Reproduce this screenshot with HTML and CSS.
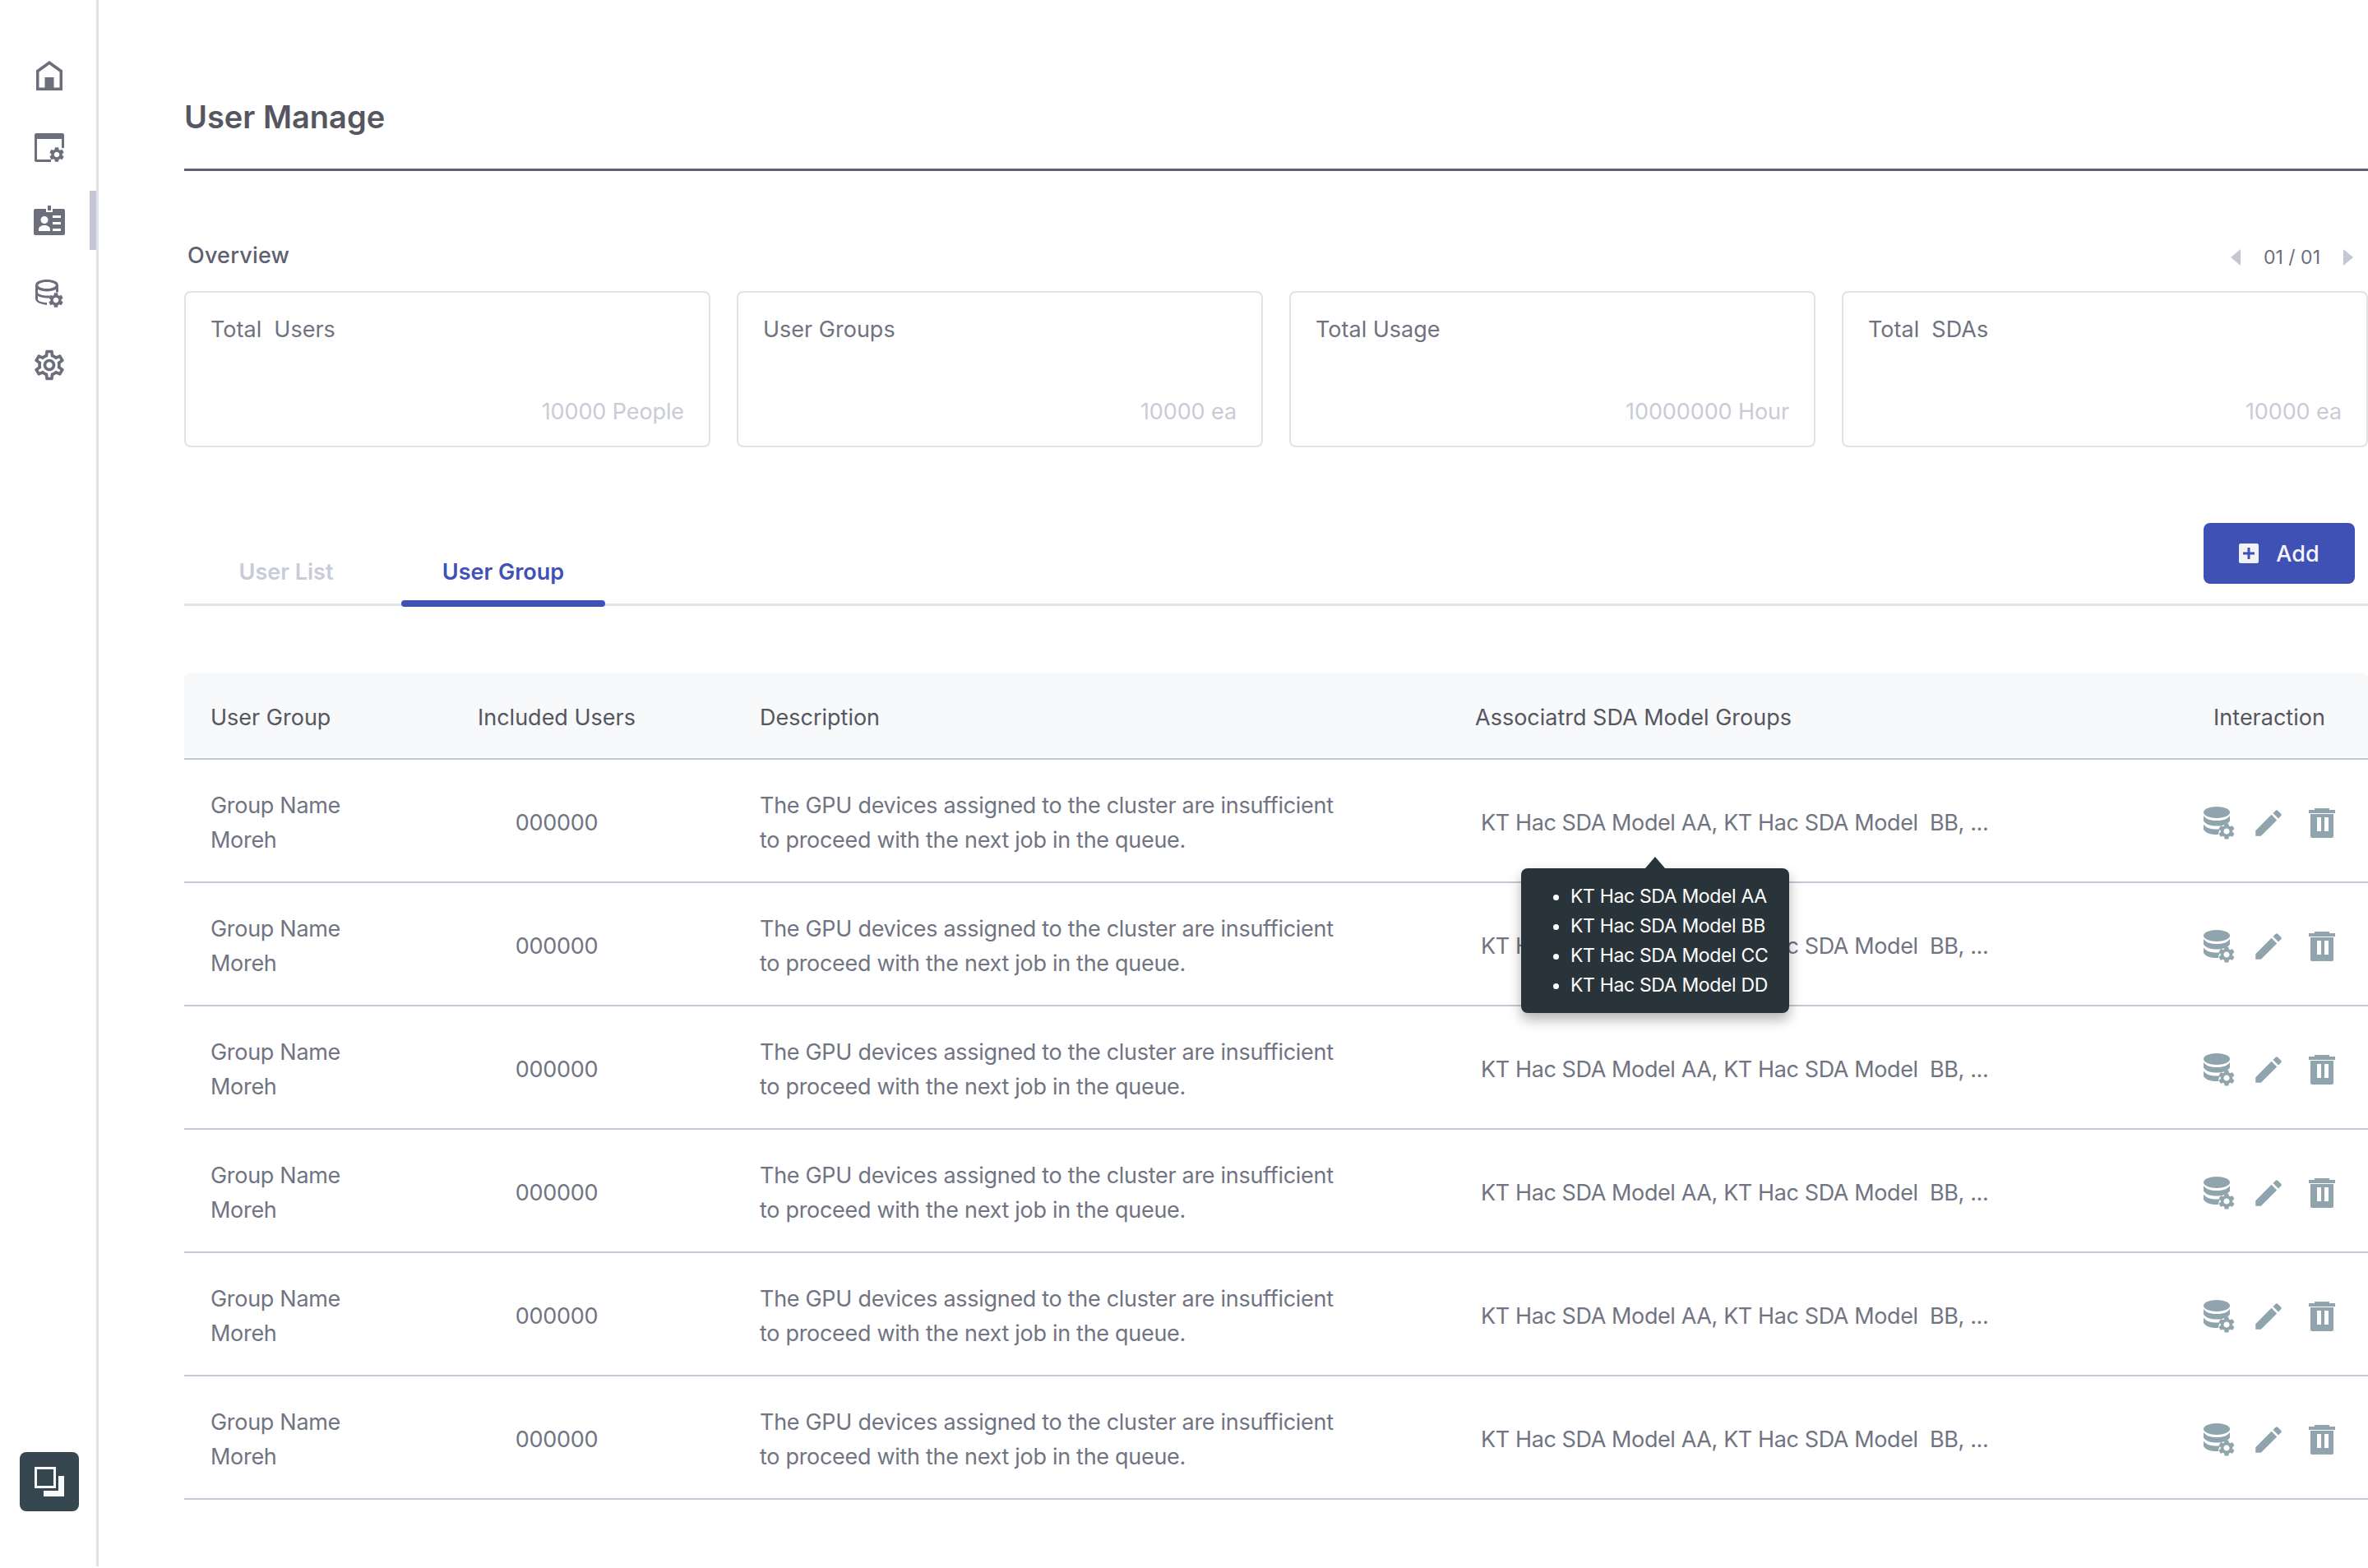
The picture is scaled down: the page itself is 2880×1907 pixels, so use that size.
FILE: index.html
```html
<!DOCTYPE html>
<html lang="en">
<head>
    <meta charset="UTF-8">
    <title>User Manage</title>
    <link rel="stylesheet" href="styles.css">
</head>
<body>
    <svg class="defs" width="0" height="0">
        <symbol id="gear" viewBox="0 0 24 24"><path d="M19.14 12.94c.04-.3.06-.61.06-.94 0-.32-.02-.64-.07-.94l2.03-1.58c.18-.14.23-.41.12-.61l-1.92-3.32c-.12-.22-.37-.29-.59-.22l-2.39.96c-.5-.38-1.03-.7-1.62-.94l-.36-2.54c-.04-.24-.24-.41-.48-.41h-3.84c-.24 0-.43.17-.47.41l-.36 2.54c-.59.24-1.13.57-1.62.94l-2.39-.96c-.22-.08-.47 0-.59.22L2.74 8.87c-.12.21-.08.47.12.61l2.03 1.58c-.05.3-.09.63-.09.94s.02.64.07.94l-2.03 1.58c-.18.14-.23.41-.12.61l1.92 3.32c.12.22.37.29.59.22l2.39-.96c.5.38 1.03.7 1.62.94l.36 2.54c.05.24.24.41.48.41h3.84c.24 0 .44-.17.47-.41l.36-2.54c.59-.24 1.13-.56 1.62-.94l2.39.96c.22.08.47 0 .59-.22l1.92-3.32c.12-.22.07-.47-.12-.61l-2.01-1.58zM12 15.6c-1.98 0-3.6-1.62-3.6-3.6s1.62-3.6 3.6-3.6 3.6 1.62 3.6 3.6-1.62 3.6-3.6 3.6z"/></symbol>
        <symbol id="db-gear" viewBox="0 0 40 42">
            <ellipse cx="16" cy="7" rx="16" ry="7"/>
            <path d="M0 11C3 15.500 9 17 16 17S29 15.500 32 11V17.500C29 22 23 23.500 16 23.500S3 22 0 17.500z"/>
            <path d="M0 21.500C3 26 9 27.500 16 27.500c1.500 0 3-.1 4.500-.3-1.500 2-2.500 4.400-2.500 6.700-.7.1-1.300.1-2 .1-7 0-13-1.500-16-6z"/>
            <use href="#gear" x="16" y="18" width="24" height="24"/>
        </symbol>
        <symbol id="pencil" viewBox="0 0 24 24"><path d="M3 17.250V21h3.750L17.810 9.940l-3.750-3.750L3 17.250zM20.710 7.040c.39-.39.39-1.020 0-1.410l-2.340-2.340c-.39-.39-1.020-.39-1.410 0l-1.830 1.830 3.750 3.750 1.830-1.830z"/></symbol>
        <symbol id="trash" viewBox="0 0 32 36"><path fill-rule="evenodd" d="M7 0h18v2h7v4H0V2h7zM2 7h28v27c0 1-1 2-2 2H4c-1 0-2-1-2-2zm8 4v17h5V11zm9 0v17h5V11z"/></symbol>
    </svg>

    <nav class="sidebar">
        <ul class="nav-list">
            <li class="nav-item">
                <svg class="nav-icon" viewBox="0 0 36 36"><path fill-rule="evenodd" d="M18 0L34 11.500V36H2V11.500zM18 4.500L5.500 13.500V32.500h7V20h11V32.500h7V13.500z"/></svg>
            </li>
            <li class="nav-item">
                <svg class="nav-icon" viewBox="0 0 36 36"><path d="M2 0h32c1 0 2 1 2 2v16h-3V7H3v25h17v3H2c-1 0-2-1-2-2V2c0-1 1-2 2-2z"/><use href="#gear" x="16" y="15" width="22" height="22"/></svg>
            </li>
            <li class="nav-item active">
                <svg class="nav-icon nav-card" viewBox="0 0 38 36"><path fill-rule="evenodd" d="M17 0h4v6h-4zM2 4h13v4h8V4h13c1 0 2 1 2 2v28c0 1-1 2-2 2H2c-1 0-2-1-2-2V6c0-1 1-2 2-2zM13 13a4.500 4.500 0 1 0 0 9 4.500 4.500 0 0 0 0-9zM6 31h14v-2c0-3-3-5-7-5s-7 2-7 5zM23 12v3h10v-3zM23 20v3h10v-3zM23 28v3h10v-3z"/></svg>
            </li>
            <li class="nav-item">
                <svg class="nav-icon nav-db" viewBox="0 0 36 36"><path fill-rule="evenodd" d="M14 0c7 0 14 2 14 7v8.500h-3V12c-3 1.500-7 2.500-11 2.500S6 13.500 3 12v4c1 2 6 3.500 11 3.500h3.500v3H14c-4 0-8-1-11-2.500v4.500c1 2 6 3.500 11 3.500v3C7 30 0 28 0 23V7c0-5 7-7 14-7zm0 3C8 3 4 5 3 7c1 2 5 4 11 4s10-2 11-4c-1-2-5-4-11-4z"/><use href="#gear" x="14" y="14" width="22" height="22"/></svg>
            </li>
            <li class="nav-item">
                <svg class="nav-icon gear-lg" viewBox="0 0 24 24"><path d="M19.430 12.980c.04-.32.07-.64.07-.98 0-.34-.03-.66-.07-.98l2.110-1.650c.19-.15.24-.42.12-.64l-2-3.460c-.09-.16-.26-.25-.44-.25-.06 0-.12.01-.17.03l-2.490 1c-.52-.4-1.080-.73-1.690-.98l-.38-2.650C14.460 2.180 14.250 2 14 2h-4c-.25 0-.46.18-.49.42l-.38 2.650c-.61.25-1.170.59-1.690.98l-2.490-1c-.06-.02-.12-.03-.18-.03-.17 0-.34.09-.43.25l-2 3.460c-.13.22-.07.49.12.64l2.110 1.650c-.04.32-.07.65-.07.98 0 .33.03.66.07.98l-2.110 1.650c-.19.15-.24.42-.12.64l2 3.460c.09.16.26.25.44.25.06 0 .12-.01.17-.03l2.490-1c.52.4 1.080.73 1.690.98l.38 2.650c.03.24.24.42.49.42h4c.25 0 .46-.18.49-.42l.38-2.650c.61-.25 1.170-.59 1.690-.98l2.490 1c.06.02.12.03.18.03.17 0 .34-.09.43-.25l2-3.460c.12-.22.07-.49-.12-.64l-2.110-1.650zm-1.980-1.710c.04.31.05.52.05.73 0 .21-.02.43-.05.73l-.14 1.130.89.7 1.080.84-.7 1.210-1.270-.51-1.040-.42-.9.68c-.43.32-.84.56-1.250.73l-1.060.43-.16 1.130-.2 1.350h-1.400l-.19-1.350-.16-1.130-1.060-.43c-.43-.18-.83-.41-1.230-.71l-.91-.7-1.060.43-1.270.51-.7-1.210 1.080-.84.89-.7-.14-1.130c-.03-.31-.05-.54-.05-.74s.02-.43.05-.73l.14-1.130-.89-.7-1.080-.84.7-1.210 1.270.51 1.040.42.9-.68c.43-.32.84-.56 1.250-.73l1.060-.43.16-1.130.2-1.350h1.390l.19 1.350.16 1.130 1.060.43c.43.18.83.41 1.230.71l.91.7 1.060-.43 1.270-.51.7 1.210-1.070.85-.89.7.14 1.130zM12 8c-2.210 0-4 1.790-4 4s1.790 4 4 4 4-1.790 4-4-1.790-4-4-4zm0 6c-1.100 0-2-.9-2-2s.9-2 2-2 2 .9 2 2-.9 2-2 2z"/></svg>
            </li>
        </ul>
        <button class="layer-btn">
            <svg class="layer-icon" viewBox="0 0 36 36"><path fill-rule="evenodd" d="M0 0h26v26H0zM3 3v20h20V3z"/><path d="M29 11h7v25H11v-7h18z"/></svg>
        </button>
    </nav>

    <main class="main">
        <h1 class="title">User Manage</h1>

        <div class="overview-head">
            <h2 class="overview-title">Overview</h2>
            <div class="pager">
                <span class="arrow arrow-left"></span>
                <span>01 / 01</span>
                <span class="arrow arrow-right"></span>
            </div>
        </div>
        <div class="cards">
            <div class="card"><div class="card-label">Total&nbsp; Users</div><div class="card-value">10000 People</div></div>
            <div class="card"><div class="card-label">User Groups</div><div class="card-value">10000 ea</div></div>
            <div class="card"><div class="card-label">Total Usage</div><div class="card-value">10000000 Hour</div></div>
            <div class="card"><div class="card-label">Total&nbsp; SDAs</div><div class="card-value">10000 ea</div></div>
        </div>

        <div class="tabs">
            <a class="tab">User List</a>
            <a class="tab tab-active">User Group</a>
            <button class="add-btn">
                <svg class="add-icon" viewBox="0 0 24 24"><path fill-rule="evenodd" d="M2 0h20c1 0 2 1 2 2v20c0 1-1 2-2 2H2c-1 0-2-1-2-2V2c0-1 1-2 2-2zm8.500 5v5.500H5v3h5.500V19h3v-5.500H19v-3h-5.500V5z"/></svg>
                Add
            </button>
        </div>

        <table class="grid">
            <colgroup>
                <col class="col-group"><col class="col-users"><col class="col-desc"><col class="col-sda"><col class="col-act">
            </colgroup>
            <thead>
                <tr>
                    <th>User Group</th>
                    <th class="center">Included Users</th>
                    <th>Description</th>
                    <th>Associatrd SDA Model Groups</th>
                    <th class="center">Interaction</th>
                </tr>
            </thead>
            <tbody>
                <tr>
                    <td>Group Name<br>Moreh</td>
                    <td class="center">000000</td>
                    <td>The GPU devices assigned to the cluster are insufficient<br>to proceed with the next job in the queue.</td>
                    <td class="sda">KT Hac SDA Model AA, KT Hac SDA Model&nbsp; BB, ...
                        <div class="tooltip">
                            <ul>
                                <li>KT Hac SDA Model AA</li>
                                <li>KT Hac SDA Model BB</li>
                                <li>KT Hac SDA Model CC</li>
                                <li>KT Hac SDA Model DD</li>
                            </ul>
                        </div>
                    </td>
                    <td><div class="actions">
                        <svg class="ic-db"><use href="#db-gear"/></svg>
                        <svg class="ic-pencil"><use href="#pencil"/></svg>
                        <svg class="ic-trash"><use href="#trash"/></svg>
                    </div></td>
                </tr>
                <tr>
                    <td>Group Name<br>Moreh</td>
                    <td class="center">000000</td>
                    <td>The GPU devices assigned to the cluster are insufficient<br>to proceed with the next job in the queue.</td>
                    <td class="sda">KT Hac SDA Model AA, KT Hac SDA Model&nbsp; BB, ...</td>
                    <td><div class="actions">
                        <svg class="ic-db"><use href="#db-gear"/></svg>
                        <svg class="ic-pencil"><use href="#pencil"/></svg>
                        <svg class="ic-trash"><use href="#trash"/></svg>
                    </div></td>
                </tr>
                <tr>
                    <td>Group Name<br>Moreh</td>
                    <td class="center">000000</td>
                    <td>The GPU devices assigned to the cluster are insufficient<br>to proceed with the next job in the queue.</td>
                    <td class="sda">KT Hac SDA Model AA, KT Hac SDA Model&nbsp; BB, ...</td>
                    <td><div class="actions">
                        <svg class="ic-db"><use href="#db-gear"/></svg>
                        <svg class="ic-pencil"><use href="#pencil"/></svg>
                        <svg class="ic-trash"><use href="#trash"/></svg>
                    </div></td>
                </tr>
                <tr>
                    <td>Group Name<br>Moreh</td>
                    <td class="center">000000</td>
                    <td>The GPU devices assigned to the cluster are insufficient<br>to proceed with the next job in the queue.</td>
                    <td class="sda">KT Hac SDA Model AA, KT Hac SDA Model&nbsp; BB, ...</td>
                    <td><div class="actions">
                        <svg class="ic-db"><use href="#db-gear"/></svg>
                        <svg class="ic-pencil"><use href="#pencil"/></svg>
                        <svg class="ic-trash"><use href="#trash"/></svg>
                    </div></td>
                </tr>
                <tr>
                    <td>Group Name<br>Moreh</td>
                    <td class="center">000000</td>
                    <td>The GPU devices assigned to the cluster are insufficient<br>to proceed with the next job in the queue.</td>
                    <td class="sda">KT Hac SDA Model AA, KT Hac SDA Model&nbsp; BB, ...</td>
                    <td><div class="actions">
                        <svg class="ic-db"><use href="#db-gear"/></svg>
                        <svg class="ic-pencil"><use href="#pencil"/></svg>
                        <svg class="ic-trash"><use href="#trash"/></svg>
                    </div></td>
                </tr>
                <tr>
                    <td>Group Name<br>Moreh</td>
                    <td class="center">000000</td>
                    <td>The GPU devices assigned to the cluster are insufficient<br>to proceed with the next job in the queue.</td>
                    <td class="sda">KT Hac SDA Model AA, KT Hac SDA Model&nbsp; BB, ...</td>
                    <td><div class="actions">
                        <svg class="ic-db"><use href="#db-gear"/></svg>
                        <svg class="ic-pencil"><use href="#pencil"/></svg>
                        <svg class="ic-trash"><use href="#trash"/></svg>
                    </div></td>
                </tr>
            </tbody>
        </table>
    </main>
</body>
</html>
```

FILE: styles.css
```css
* {
    box-sizing: border-box;
}
html, body {
    margin: 0;
    padding: 0;
    background-color: #fff;
}
body {
    font-family: Inter, "Noto Sans", sans-serif;
    display: flex;
    align-items: flex-start;
    height: 1907px;
    overflow: hidden;
    color: #6b6e7c;
}
.defs {
    position: absolute;
}

/* sidebar */
.sidebar {
    width: 120px;
    height: 1905px;
    flex: none;
    display: flex;
    flex-direction: column;
    border-right: 3px solid #e1e1e8;
    padding: 48px 0 67px;
}
.nav-list {
    list-style: none;
    margin: 0;
    padding: 0;
}
.nav-item {
    position: relative;
    height: 88px;
    display: flex;
    align-items: center;
    justify-content: center;
    padding-left: 3px;
}
.nav-icon {
    width: 36px;
    height: 36px;
    fill: #6c6e7c;
}
.nav-icon.nav-card {
    width: 38px;
}
.nav-icon.nav-db {
    margin: 4px 0 0 2px;
}
.nav-icon.gear-lg {
    width: 44px;
    height: 44px;
}
.active::after {
    content: "";
    position: absolute;
    right: 0;
    top: 8px;
    width: 8px;
    height: 72px;
    background-color: #c5c7d4;
}
.layer-btn {
    margin: auto 0 0 24px;
    width: 72px;
    height: 72px;
    border: none;
    border-radius: 8px;
    background-color: #37474f;
    display: flex;
    align-items: center;
    justify-content: center;
    padding: 0;
}
.layer-icon {
    width: 36px;
    height: 36px;
    fill: #f7f9fb;
}

/* main */
.main {
    flex: none;
    width: 2656px;
    margin-left: 104px;
}
.title {
    margin: 0;
    height: 208px;
    padding-top: 116px;
    border-bottom: 3px solid #5f6170;
    font-size: 38px;
    line-height: 52px;
    font-weight: 600;
    color: #555660;
}
.overview-head {
    display: flex;
    justify-content: space-between;
    align-items: center;
    height: 40px;
    margin-top: 82px;
    padding-left: 4px;
}
.overview-title {
    margin: 0;
    font-size: 27px;
    font-weight: 500;
    letter-spacing: 0.2px;
    color: #5f6170;
}
.pager {
    display: flex;
    align-items: center;
    gap: 28px;
    font-size: 23px;
    color: #6b6e7c;
    margin-right: 18px;
    padding-top: 6px;
}
.arrow {
    width: 0;
    height: 0;
    border-top: 10px solid transparent;
    border-bottom: 10px solid transparent;
}
.arrow-left {
    border-right: 12px solid #c5c7d4;
}
.arrow-right {
    border-left: 12px solid #c5c7d4;
}
.cards {
    display: grid;
    grid-template-columns: repeat(4, 640px);
    gap: 32px;
    margin-top: 24px;
}
.card {
    height: 190px;
    border: 2px solid #e1e1e8;
    border-radius: 8px;
    padding: 27px 30px 23px;
    display: flex;
    flex-direction: column;
    justify-content: space-between;
}
.card-label {
    font-size: 27px;
    line-height: 36px;
    color: #6f7280;
}
.card-value {
    font-size: 27px;
    line-height: 36px;
    letter-spacing: -0.1px;
    text-align: right;
    color: #c9cbd6;
}

/* tabs */
.tabs {
    display: flex;
    height: 193px;
    border-bottom: 3px solid #e1e1e8;
    align-items: flex-end;
}
.tab {
    position: relative;
    width: 248px;
    height: 72px;
    margin-right: 16px;
    display: flex;
    align-items: flex-start;
    justify-content: center;
    padding-top: 16px;
    font-size: 27px;
    line-height: 36px;
    font-weight: 600;
    color: #c9cbd6;
}
.tab-active {
    color: #3f51b5;
}
.tab-active::after {
    content: "";
    position: absolute;
    left: 0;
    right: 0;
    bottom: -4px;
    height: 8px;
    border-radius: 4px;
    background-color: #3f51b5;
}
.add-btn {
    margin: 0 16px auto auto;
    position: relative;
    top: 92px;
    width: 184px;
    height: 74px;
    border: none;
    border-radius: 8px;
    background-color: #3f51b5;
    color: #f5f5fa;
    font-family: inherit;
    font-size: 27px;
    font-weight: 500;
    display: flex;
    align-items: center;
    justify-content: center;
    gap: 21px;
    padding: 0;
}
.add-icon {
    width: 24px;
    height: 24px;
    fill: #f1f1f8;
}

/* table */
.grid {
    width: 2656px;
    table-layout: fixed;
    border-collapse: separate;
    border-spacing: 0;
    margin-top: 81px;
    font-size: 27px;
    line-height: 42px;
}
.col-group { width: 238px; }
.col-users { width: 430px; }
.col-desc { width: 870px; }
.col-sda { width: 878px; }
.col-act { width: 240px; }
.grid th {
    height: 106px;
    background-color: #f8f9fb;
    border-bottom: 2px solid #c5c7d4;
    font-weight: 400;
    text-align: left;
    color: #555660;
    padding: 6px 0 0 32px;
}
.grid th:first-child { border-top-left-radius: 8px; }
.grid th:last-child { border-top-right-radius: 8px; }
.grid th.center,
.grid td.center {
    text-align: center;
    padding-left: 0;
}
.grid td {
    height: 150px;
    border-bottom: 2px solid #c5c7d4;
    padding: 5px 0 0 32px;
    vertical-align: middle;
    letter-spacing: -0.3px;
    color: #717482;
}
.grid td.sda {
    position: relative;
    padding-left: 39px;
    letter-spacing: -0.4px;
}
.actions {
    display: flex;
    align-items: center;
    justify-content: center;
    margin-left: -32px;
    fill: #90a4ae;
}
.ic-db { width: 40px; height: 42px; margin-top: 2px; }
.ic-pencil { width: 42px; height: 42px; margin: 0 28px 0 18px; }
.ic-trash { width: 32px; height: 36px; }

/* tooltip */
.tooltip {
    position: absolute;
    left: 88px;
    top: 132px;
    width: 326px;
    height: 176px;
    background-color: #29343a;
    border-radius: 8px;
    box-shadow: 0 8px 16px rgba(0, 0, 0, 0.3);
    color: #fff;
    font-size: 23px;
    line-height: 36px;
    letter-spacing: -0.35px;
    z-index: 2;
}
.tooltip::before {
    content: "";
    position: absolute;
    left: 151px;
    top: -14px;
    border-left: 12px solid transparent;
    border-right: 12px solid transparent;
    border-bottom: 14px solid #29343a;
}
.tooltip ul {
    margin: 0;
    padding: 16px 0 0 60px;
}
```
